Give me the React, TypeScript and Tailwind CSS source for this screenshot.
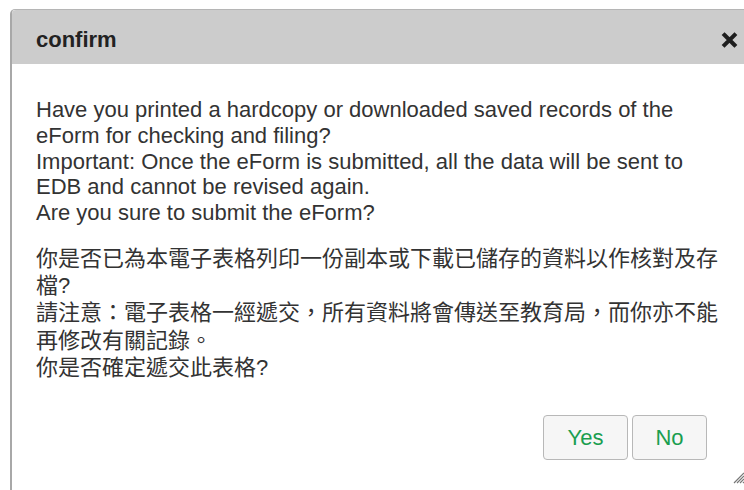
import React from "react";

const font = '"Liberation Sans", Arial, "Noto Sans CJK TC", sans-serif';

function CloseIcon() {
  return (
    <svg width="17" height="16" viewBox="0 0 17 16" aria-hidden="true">
      <path d="M3.5 3 L13.5 13 M13.5 3 L3.5 13" stroke="#1e1e1e" strokeWidth="4" strokeLinecap="square" />
    </svg>
  );
}

function ResizeGrip() {
  return (
    <svg width="12" height="12" viewBox="0 0 12 12" aria-hidden="true">
      <path d="M11 1 L1 11 M11 4 L4 11 M11 7 L7 11 M11 10 L10 11" stroke="#777" strokeWidth="1.2" />
    </svg>
  );
}

export default function App() {
  const english = [
    "Have you printed a hardcopy or downloaded saved records of the",
    "eForm for checking and filing?",
    "Important: Once the eForm is submitted, all the data will be sent to",
    "EDB and cannot be revised again.",
    "Are you sure to submit the eForm?",
  ];
  const chinese = [
    "你是否已為本電子表格列印一份副本或下載已儲存的資料以作核對及存",
    "檔?",
    "請注意：電子表格一經遞交，所有資料將會傳送至教育局，而你亦不能",
    "再修改有關記錄。",
    "你是否確定遞交此表格?",
  ];

  return (
    <div
      className="w-[744px] h-[490px] bg-white overflow-hidden pt-[9px] pl-[10px]"
      style={{ fontFamily: font }}
    >
      <div className="w-[740px] h-[500px] flex flex-col border-l-2 border-t border-[#b5b5b5] border-l-[#a8a8a8] rounded-tl-[5px] bg-white relative">
        {/* title bar */}
        <div className="h-[54px] shrink-0 bg-[#cccccc] flex items-center pl-[24px] pr-[4px] rounded-tl-[4px]">
          <span className="text-[22px] font-bold text-[#222] flex-1 leading-none mt-[5px]">confirm</span>
          <span className="mr-[8px] mt-[5px] flex">
            <CloseIcon />
          </span>
        </div>

        {/* message */}
        <div className="pl-[24px] pt-[33px] text-[22px] text-[#333] whitespace-nowrap">
          <div className="leading-[25.8px]">
            {english.map((l) => (
              <div key={l}>{l}</div>
            ))}
          </div>
          <div className="h-[19px]" />
          <div className="leading-[27.2px]">
            {chinese.map((l) => (
              <div key={l}>{l}</div>
            ))}
          </div>
        </div>

        {/* buttons */}
        <div className="flex justify-end gap-[4px] pr-[43px] mt-[34px]">
          <button className="w-[85px] h-[45px] rounded-[4px] border border-[#b8b8b8] bg-[#f6f6f6] text-[22px] text-[#1a9e50]">
            Yes
          </button>
          <button className="w-[75px] h-[45px] rounded-[4px] border border-[#b8b8b8] bg-[#f6f6f6] text-[22px] text-[#1a9e50]">
            No
          </button>
        </div>

        <div className="absolute left-[721px] top-[462px]">
          <ResizeGrip />
        </div>
      </div>
    </div>
  );
}
